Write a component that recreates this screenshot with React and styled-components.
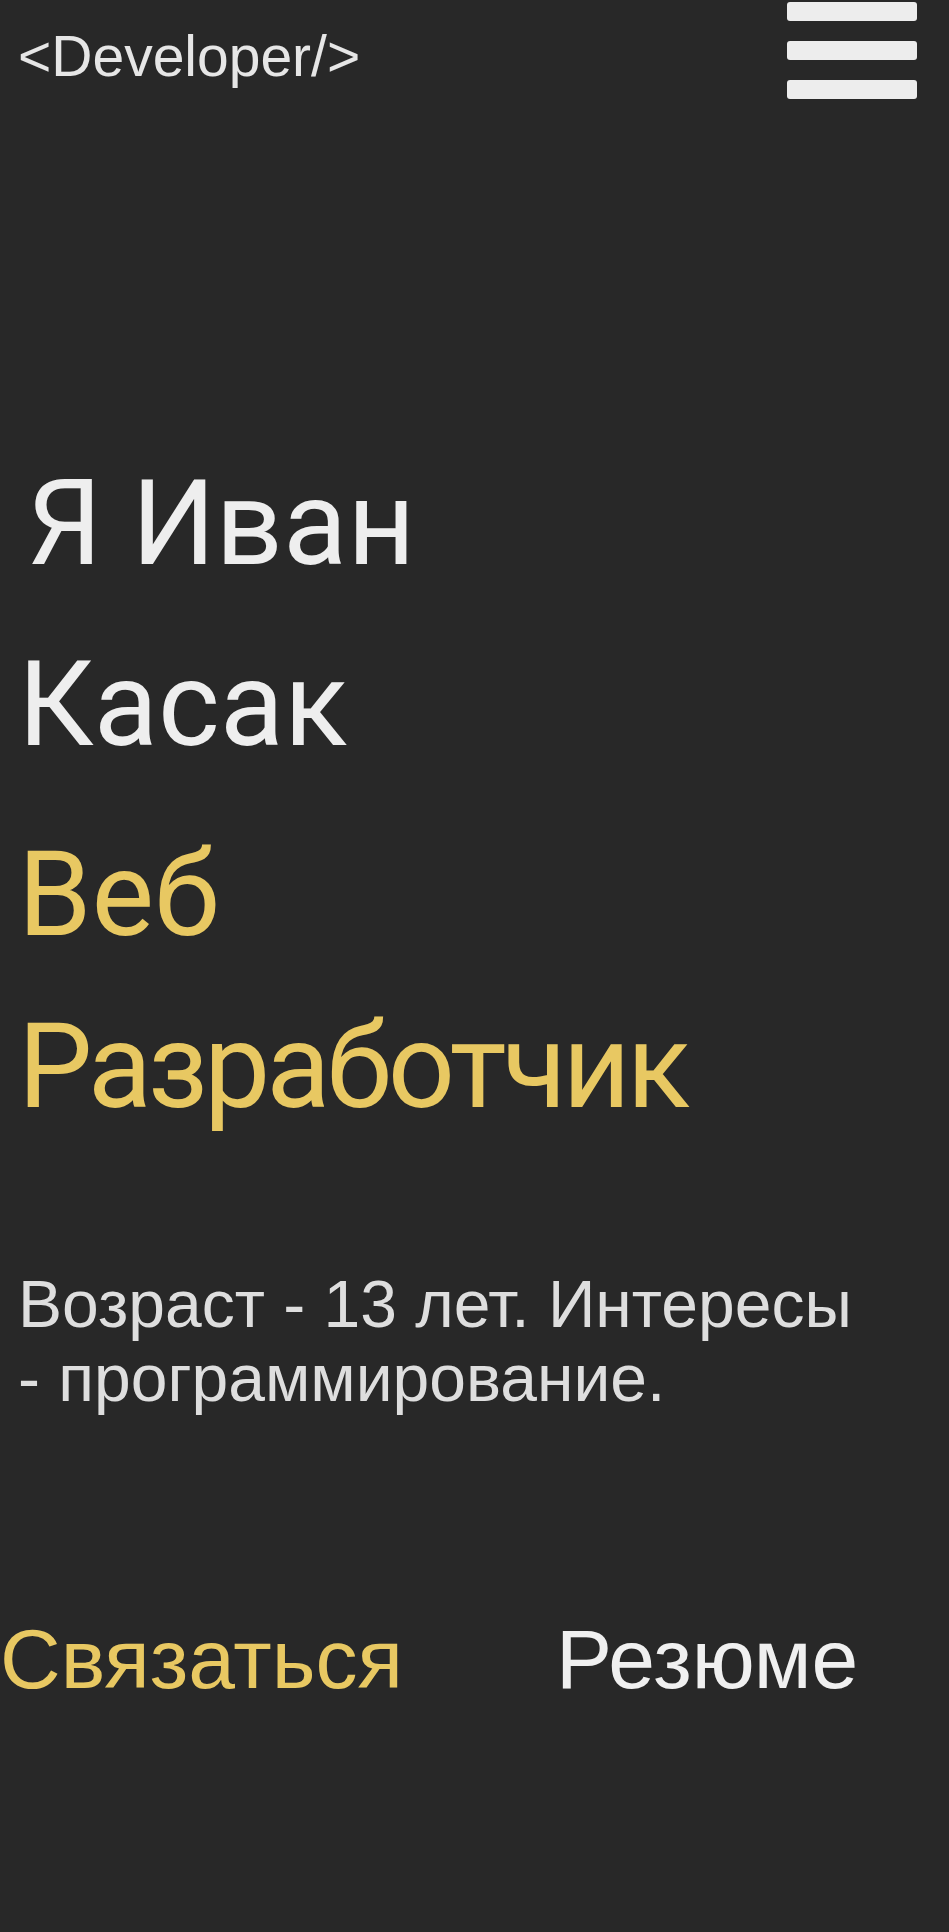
import React from 'react';
import styled, { createGlobalStyle } from 'styled-components';

const GlobalStyle = createGlobalStyle`
    html, body {
        margin: 0;
        padding: 0;
        background-color: #282828;
    }

    body {
        font-family: "Liberation Sans", Arial, sans-serif;
        color: #eeeeee;
    }
`;

const Page = styled.div`
    min-height: 1932px;
    background-color: #282828;
    overflow: hidden;
`;

const Header = styled.header`
    height: 100px;
    display: flex;
    justify-content: space-between;
    align-items: flex-start;
    padding: 0 32px 0 18px;
`;

const Logo = styled.a`
    margin-top: 28px;
    font-size: 57px;
    line-height: 1;
    color: #e6e6e6;
    text-decoration: none;
`;

const Burger = styled.button`
    width: 130px;
    margin-top: 2px;
    padding: 0;
    border: none;
    background: none;
    display: flex;
    flex-direction: column;
    gap: 20px;
    cursor: pointer;
`;

const Bar = styled.span`
    display: block;
    height: 19px;
    border-radius: 3px;
    background-color: #ededed;
`;

const Hero = styled.section`
    padding: 334px 18px 0;
`;

const Title = styled.h1`
    margin: ${props => props.$gap}px 0 0;
    font-family: Roboto, "Liberation Sans", sans-serif;
    font-weight: 400;
    font-size: 118px;
    line-height: ${props => props.$lh}px;
    color: ${props => props.$accent ? '#e8c862' : '#eeeeee'};
`;

const Line = styled.span`
    display: block;
    padding-left: ${props => props.$indent || 0}px;
    letter-spacing: ${props => props.$tight ? '-4px' : 'normal'};
`;

const About = styled.p`
    margin: 114px 0 0;
    font-size: 66px;
    line-height: 74px;
    color: #dedede;
`;

const Actions = styled.nav`
    display: flex;
    gap: 153px;
    margin-top: 202px;
`;

const Action = styled.a`
    font-size: 84px;
    line-height: 1;
    text-decoration: none;
    color: ${props => props.$accent ? '#e8c862' : '#f0f0f0'};
    cursor: pointer;
`;

export default function App() {
    return (
        <Page>
            <GlobalStyle />
            <Header>
                <Logo href="#">&lt;Developer/&gt;</Logo>
                <Burger aria-label="Меню">
                    <Bar />
                    <Bar />
                    <Bar />
                </Burger>
            </Header>
            <Hero>
                <Title $lh={181} $gap={0}>
                    <Line $indent={9}>Я Иван</Line>
                    <Line>Касак</Line>
                </Title>
                <Title as="h2" $lh={172} $gap={13} $accent>
                    <Line>Веб</Line>
                    <Line $tight>Разработчик</Line>
                </Title>
                <About>
                    Возраст - 13 лет. Интересы<br />
                    - программирование.
                </About>
            </Hero>
            <Actions>
                <Action $accent>Связаться</Action>
                <Action>Резюме</Action>
            </Actions>
        </Page>
    );
}
